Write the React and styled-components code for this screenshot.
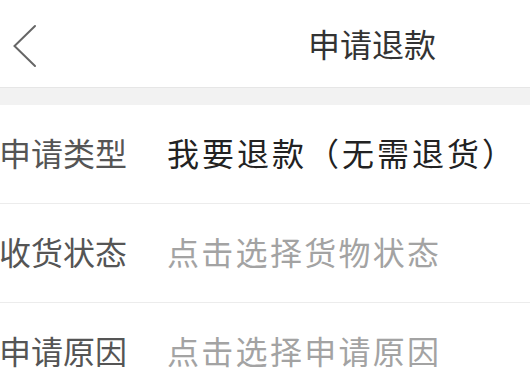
import React from 'react';
import styled, { createGlobalStyle } from 'styled-components';

const GlobalStyle = createGlobalStyle`
  html, body {
    margin: 0;
    padding: 0;
    background: #ffffff;
    overflow: hidden;
  }
  body {
    font-family: "Noto Sans CJK SC", "Noto Sans", sans-serif;
  }
`;

const Page = styled.div`
  width: 530px;
  height: 377px;
  overflow: hidden;
  background: #ffffff;
`;

const Header = styled.header`
  display: flex;
  align-items: center;
  height: 87px;
  border-bottom: 1px solid #e6e6e6;
  background: #ffffff;
`;

const BackButton = styled.button`
  display: flex;
  align-items: center;
  justify-content: center;
  width: 50px;
  height: 87px;
  padding: 0;
  border: none;
  background: transparent;
`;

const Title = styled.h1`
  flex: 1;
  margin: 0 0 0 258px;
  padding-bottom: 1px;
  font-size: 32px;
  font-weight: 400;
  line-height: 1;
  color: #333333;
`;

const Spacer = styled.div`
  height: 17px;
  background: #f2f2f2;
`;

const Row = styled.div`
  display: flex;
  align-items: center;
  box-sizing: border-box;
  height: 99px;
  padding-bottom: 5px;
  border-bottom: 1px solid #ececec;
`;

const Label = styled.span`
  flex: 0 0 168px;
  margin-left: -1px;
  font-size: 32px;
  line-height: 1;
  color: #555555;
  white-space: nowrap;
`;

const Value = styled.span`
  font-size: 32px;
  line-height: 1;
  white-space: nowrap;
  color: ${(p) => (p.$placeholder ? '#a3a3a3' : '#222222')};
  letter-spacing: ${(p) => (p.$placeholder ? '2.3px' : '3px')};
`;

const rows = [
  { label: '申请类型', value: '我要退款（无需退货）' },
  { label: '收货状态', value: '点击选择货物状态', placeholder: true },
  { label: '申请原因', value: '点击选择申请原因', placeholder: true },
];

const ChevronLeft = () => (
  <svg width="50" height="87" viewBox="0 0 50 87">
    <polyline
      points="35,26 14.5,46 35,66"
      fill="none"
      stroke="#666666"
      strokeWidth="2"
      strokeLinecap="round"
      strokeLinejoin="miter"
    />
  </svg>
);

export default function App() {
  return (
    <Page>
      <GlobalStyle />
      <Header>
        <BackButton aria-label="返回">
          <ChevronLeft />
        </BackButton>
        <Title>申请退款</Title>
      </Header>
      <Spacer />
      {rows.map((r) => (
        <Row key={r.label}>
          <Label>{r.label}</Label>
          <Value $placeholder={r.placeholder}>{r.value}</Value>
        </Row>
      ))}
    </Page>
  );
}
